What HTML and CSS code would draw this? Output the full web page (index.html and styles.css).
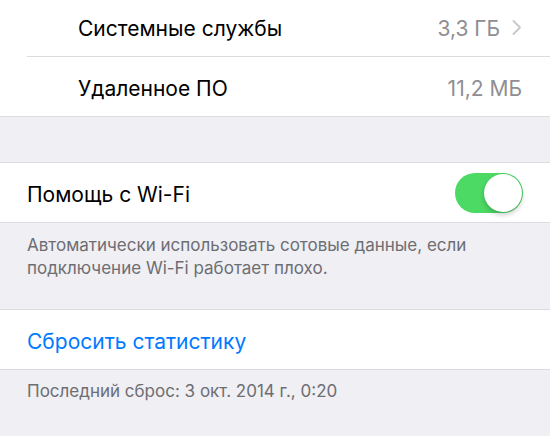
FILE: index.html
```html
<!DOCTYPE html>
<html lang="ru">
<head>
  <meta charset="UTF-8">
  <meta name="viewport" content="width=device-width, initial-scale=1">
  <title>Сотовые данные</title>
  <link rel="stylesheet" href="styles.css">
</head>
<body>

  <div class="group group-first">
    <div class="cell cell-sub">
      <span class="label">Системные службы</span>
      <span class="value">3,3 ГБ</span>
      <svg class="chevron" width="10" height="15" viewBox="0 0 10 15">
        <path d="M1.5 1 L8 7.5 L1.5 14" fill="none" stroke="#c7c7cc" stroke-width="1.8" stroke-linecap="round" stroke-linejoin="round"/>
      </svg>
    </div>
    <div class="cell cell-sub">
      <span class="label">Удаленное ПО</span>
      <span class="value">11,2 МБ</span>
    </div>
  </div>

  <div class="group group-spaced">
    <div class="cell">
      <span class="label">Помощь с Wi-Fi</span>
      <div class="switch on"><div class="knob"></div></div>
    </div>
  </div>
  <p class="footer">Автоматически использовать сотовые данные, если подключение Wi-Fi работает плохо.</p>

  <div class="group">
    <div class="cell">
      <span class="label link">Сбросить статистику</span>
    </div>
  </div>
  <p class="footer footer-short">Последний сброс: 3 окт. 2014 г., 0:20</p>

</body>
</html>
```

FILE: styles.css
```css
:root {
  --bg: #efeff4;
  --cell: #ffffff;
  --sep: #dcdce0;
  --text: #000000;
  --muted: #8e8e93;
  --footer: #6d6d72;
  --blue: #007aff;
  --green: #4cd964;
  --font-main: 'Inter', 'Roboto', Arial, sans-serif;
}

body {
  margin: 0;
  background: var(--bg);
  font-family: var(--font-main);
  color: var(--text);
  width: 550px;
  height: 436px;
  overflow: hidden;
}

.group {
  background: var(--cell);
  border-bottom: 1px solid var(--sep);
}

/* la capture commence au milieu de la première cellule */
.group-first {
  margin-top: -3px;
}

.group-spaced {
  margin-top: 45px;
  border-top: 1px solid var(--sep);
}

.footer + .group {
  border-top: 1px solid var(--sep);
}

.cell {
  display: flex;
  align-items: center;
  box-sizing: border-box;
  height: 59px;
  padding: 3px 28px 0 27px;
  font-size: 21px;
  position: relative;
}

.cell-sub {
  padding-left: 78px;
}

/* ligne de séparation entre les cellules */
.cell + .cell {
  margin-top: 1px;
}

.cell + .cell::before {
  content: "";
  position: absolute;
  top: -1px;
  left: 27px;
  right: 0;
  height: 1px;
  background: var(--sep);
}

.label {
  flex: 1;
}

.link {
  color: var(--blue);
}

.value {
  color: var(--muted);
}

.chevron {
  margin-left: 12px;
  margin-top: -2px;
}

.switch {
  width: 68px;
  height: 40px;
  border-radius: 20px;
  background: var(--green);
  position: relative;
  margin-top: -3px;
  margin-right: -1px;
}

.switch .knob {
  position: absolute;
  top: 1px;
  right: 1px;
  width: 38px;
  height: 38px;
  border-radius: 50%;
  background: #fff;
  box-shadow: 0 3px 5px rgba(0, 0, 0, 0.2), 0 0 1px rgba(0, 0, 0, 0.15);
}

.footer {
  margin: 0;
  padding: 11px 60px 29px 27px;
  font-size: 17px;
  line-height: 23px;
  color: var(--footer);
}

.footer-short {
  padding-top: 10px;
}
```
